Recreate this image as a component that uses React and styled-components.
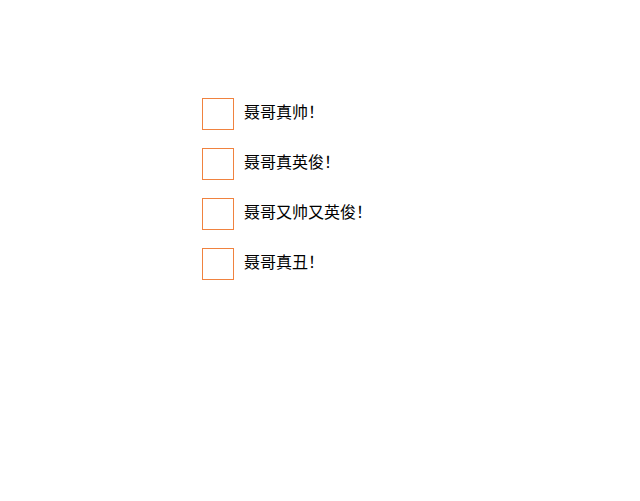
import styled, { createGlobalStyle } from "styled-components";

const GlobalStyle = createGlobalStyle`
  body {
    margin: 0;
    background: #fff;
    font-family: "Noto Sans CJK SC", "Liberation Sans", sans-serif;
  }
`;

const items = ["聂哥真帅！", "聂哥真英俊！", "聂哥又帅又英俊！", "聂哥真丑！"];

const App = () => {
  return (
    <>
      <GlobalStyle />
      <StyledList>
        {items.map((label) => (
          <StyledRow key={label}>
            <StyledBox />
            <StyledLabel>{label}</StyledLabel>
          </StyledRow>
        ))}
      </StyledList>
    </>
  );
};

export default App;

//#region Styled Objects
const StyledList = styled.div`
  display: flex;
  flex-direction: column;
  gap: 18px;
  padding: 98px 0 0 202px;
`;

const StyledRow = styled.label`
  display: flex;
  align-items: center;
  gap: 10px;
`;

const StyledBox = styled.span`
  box-sizing: border-box;
  width: 32px;
  height: 32px;
  border: 1px solid #f0823f;
`;

const StyledLabel = styled.span`
  font-size: 16px;
  line-height: 24px;
  margin-bottom: 7px;
  color: #000;
`;
//#endregion
